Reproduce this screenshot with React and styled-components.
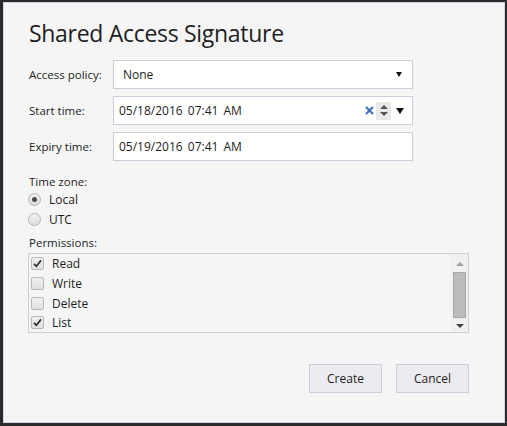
import React from 'react';
import styled, { createGlobalStyle } from 'styled-components';

const GlobalStyle = createGlobalStyle`
	html, body {
		margin: 0;
		padding: 0;
		background: #2b2b2d;
	}
	body {
		font-family: 'Open Sans', 'Noto Sans', sans-serif;
		color: #1e1e1e;
	}
`;

const Dialog = styled.div`
	box-sizing: border-box;
	width: 502px;
	height: 421px;
	margin: 2px 0 0 3px;
	background: #f5f5f5;
	border: 1px solid #d4d4e4;
	padding: 14px 35px 0 25px;
	display: flex;
	flex-direction: column;
`;

const Title = styled.h1`
	margin: 0 0 11px;
	font-size: 23px;
	font-weight: 400;
	letter-spacing: -0.3px;
	color: #1e1e1e;
	line-height: 32px;
`;

const FieldRow = styled.div`
	display: flex;
	align-items: center;
	margin-bottom: 7px;
`;

const Label = styled.div`
	width: 84px;
	font-size: 11.5px;
	color: #1e1e1e;
`;

const Field = styled.div`
	box-sizing: border-box;
	width: 300px;
	height: 29px;
	background: #fff;
	border: 1px solid #cccedb;
	display: flex;
	align-items: center;
	padding: 0 ${(p) => (p.$wide ? '9px' : '5px')};
	font-size: 12px;
	color: #1e1e1e;
`;

const FieldText = styled.span`
	flex: 1;
	word-spacing: 2px;
`;

const Arrow = styled.span`
	width: 0;
	height: 0;
	border-left: ${(p) => p.$size}px solid transparent;
	border-right: ${(p) => p.$size}px solid transparent;
	border-top: ${(p) => p.$size + 2}px solid #111;
	margin-right: ${(p) => p.$mr || 0}px;
`;

const Clear = styled.svg`
	width: 9px;
	height: 9px;
	margin-right: 2px;
`;

const Spin = styled.div`
	width: 15px;
	height: 18px;
	background: #e9e9e9;
	display: flex;
	flex-direction: column;
	align-items: center;
	justify-content: center;
	gap: 3px;
	margin-right: 5px;
`;

const SmallTri = styled.span`
	width: 0;
	height: 0;
	border-left: 4px solid transparent;
	border-right: 4px solid transparent;
	${(p) => (p.$up ? 'border-bottom: 4px solid #555;' : 'border-top: 4px solid #555;')}
`;

const Section = styled.div`
	font-size: 11.5px;
	margin-top: ${(p) => p.$mt || 0}px;
	margin-bottom: ${(p) => p.$mb || 0}px;
`;

const Option = styled.div`
	display: flex;
	align-items: center;
	height: 20px;
	font-size: 12px;
	gap: 8px;
`;

const Radio = styled.span`
	box-sizing: border-box;
	width: 13px;
	height: 13px;
	border-radius: 50%;
	border: 1px solid #b4b4b4;
	background: linear-gradient(#f2f2f2, #dcdcdc);
	display: flex;
	align-items: center;
	justify-content: center;
	margin-left: -1px;

	&::after {
		content: '';
		width: 5px;
		height: 5px;
		border-radius: 50%;
		background: ${(p) => (p.$on ? '#4a4a4a' : 'transparent')};
	}
`;

const ListBox = styled.div`
	box-sizing: border-box;
	width: 441px;
	height: 80px;
	margin-left: -1px;
	border: 1px solid #cccedb;
	display: flex;
`;

const ListItems = styled.div`
	flex: 1;
	padding: 0 0 0 2px;

	& > div {
		height: 19.7px;
	}
`;

const Check = styled.span`
	box-sizing: border-box;
	width: 13px;
	height: 13px;
	border: 1px solid #b8b8b8;
	border-radius: 2px;
	background: linear-gradient(#efefef, #e0e0e0);
	display: flex;
	align-items: center;
	justify-content: center;
`;

const Scrollbar = styled.div`
	width: 17px;
	background: #f0f0f0;
	display: flex;
	flex-direction: column;
	align-items: center;
	padding: 8px 0 4px;
	box-sizing: border-box;
`;

const Thumb = styled.div`
	box-sizing: border-box;
	width: 13px;
	flex: 1;
	margin: 6px 0 6px;
	background: #bcbcbc;
	border: 1px solid #a9a9a9;
`;

const ScrollTri = styled.span`
	width: 0;
	height: 0;
	border-left: 4px solid transparent;
	border-right: 4px solid transparent;
	${(p) => (p.$up ? 'border-bottom: 4px solid #a0a0a0;' : 'border-top: 4px solid #404040;')}
`;

const Footer = styled.div`
	display: flex;
	justify-content: flex-end;
	gap: 14px;
	margin-top: 31px;
`;

const Button = styled.button`
	box-sizing: border-box;
	width: 73px;
	height: 29px;
	background: #ecebf0;
	border: 1px solid #cccedb;
	font-family: inherit;
	font-size: 12px;
	color: #1e1e1e;
	padding: 0;
`;

const CheckMark = () => (
	<svg width="9" height="9" viewBox="0 0 9 9">
		<path d="M1 4.8 L3.4 7.2 L8 1.4" fill="none" stroke="#333" strokeWidth="1.8" />
	</svg>
);

const permissions = [
	{ name: 'Read', on: true },
	{ name: 'Write', on: false },
	{ name: 'Delete', on: false },
	{ name: 'List', on: true },
];

const App = () => (
	<>
		<GlobalStyle />
		<Dialog>
			<Title>Shared Access Signature</Title>
			<FieldRow>
				<Label>Access policy:</Label>
				<Field $wide>
					<FieldText>None</FieldText>
					<Arrow $size={3} $mr={1} />
				</Field>
			</FieldRow>
			<FieldRow>
				<Label>Start time:</Label>
				<Field>
					<FieldText>05/18/2016 07:41 AM</FieldText>
					<Clear viewBox="0 0 9 9">
						<path d="M1 1 L8 8 M8 1 L1 8" stroke="#3b6fc0" strokeWidth="2" />
					</Clear>
					<Spin>
						<SmallTri $up />
						<SmallTri />
					</Spin>
					<Arrow $size={4} $mr={3} />
				</Field>
			</FieldRow>
			<FieldRow>
				<Label>Expiry time:</Label>
				<Field>
					<FieldText>05/19/2016 07:41 AM</FieldText>
				</Field>
			</FieldRow>
			<Section $mt={6}>Time zone:</Section>
			<Option>
				<Radio $on />
				Local
			</Option>
			<Option>
				<Radio />
				UTC
			</Option>
			<Section $mt={6} $mb={3}>Permissions:</Section>
			<ListBox>
				<ListItems>
					{permissions.map((p) => (
						<Option key={p.name}>
							<Check>{p.on && <CheckMark />}</Check>
							{p.name}
						</Option>
					))}
				</ListItems>
				<Scrollbar>
					<ScrollTri $up />
					<Thumb />
					<ScrollTri />
				</Scrollbar>
			</ListBox>
			<Footer>
				<Button>Create</Button>
				<Button>Cancel</Button>
			</Footer>
		</Dialog>
	</>
);

export default App;
